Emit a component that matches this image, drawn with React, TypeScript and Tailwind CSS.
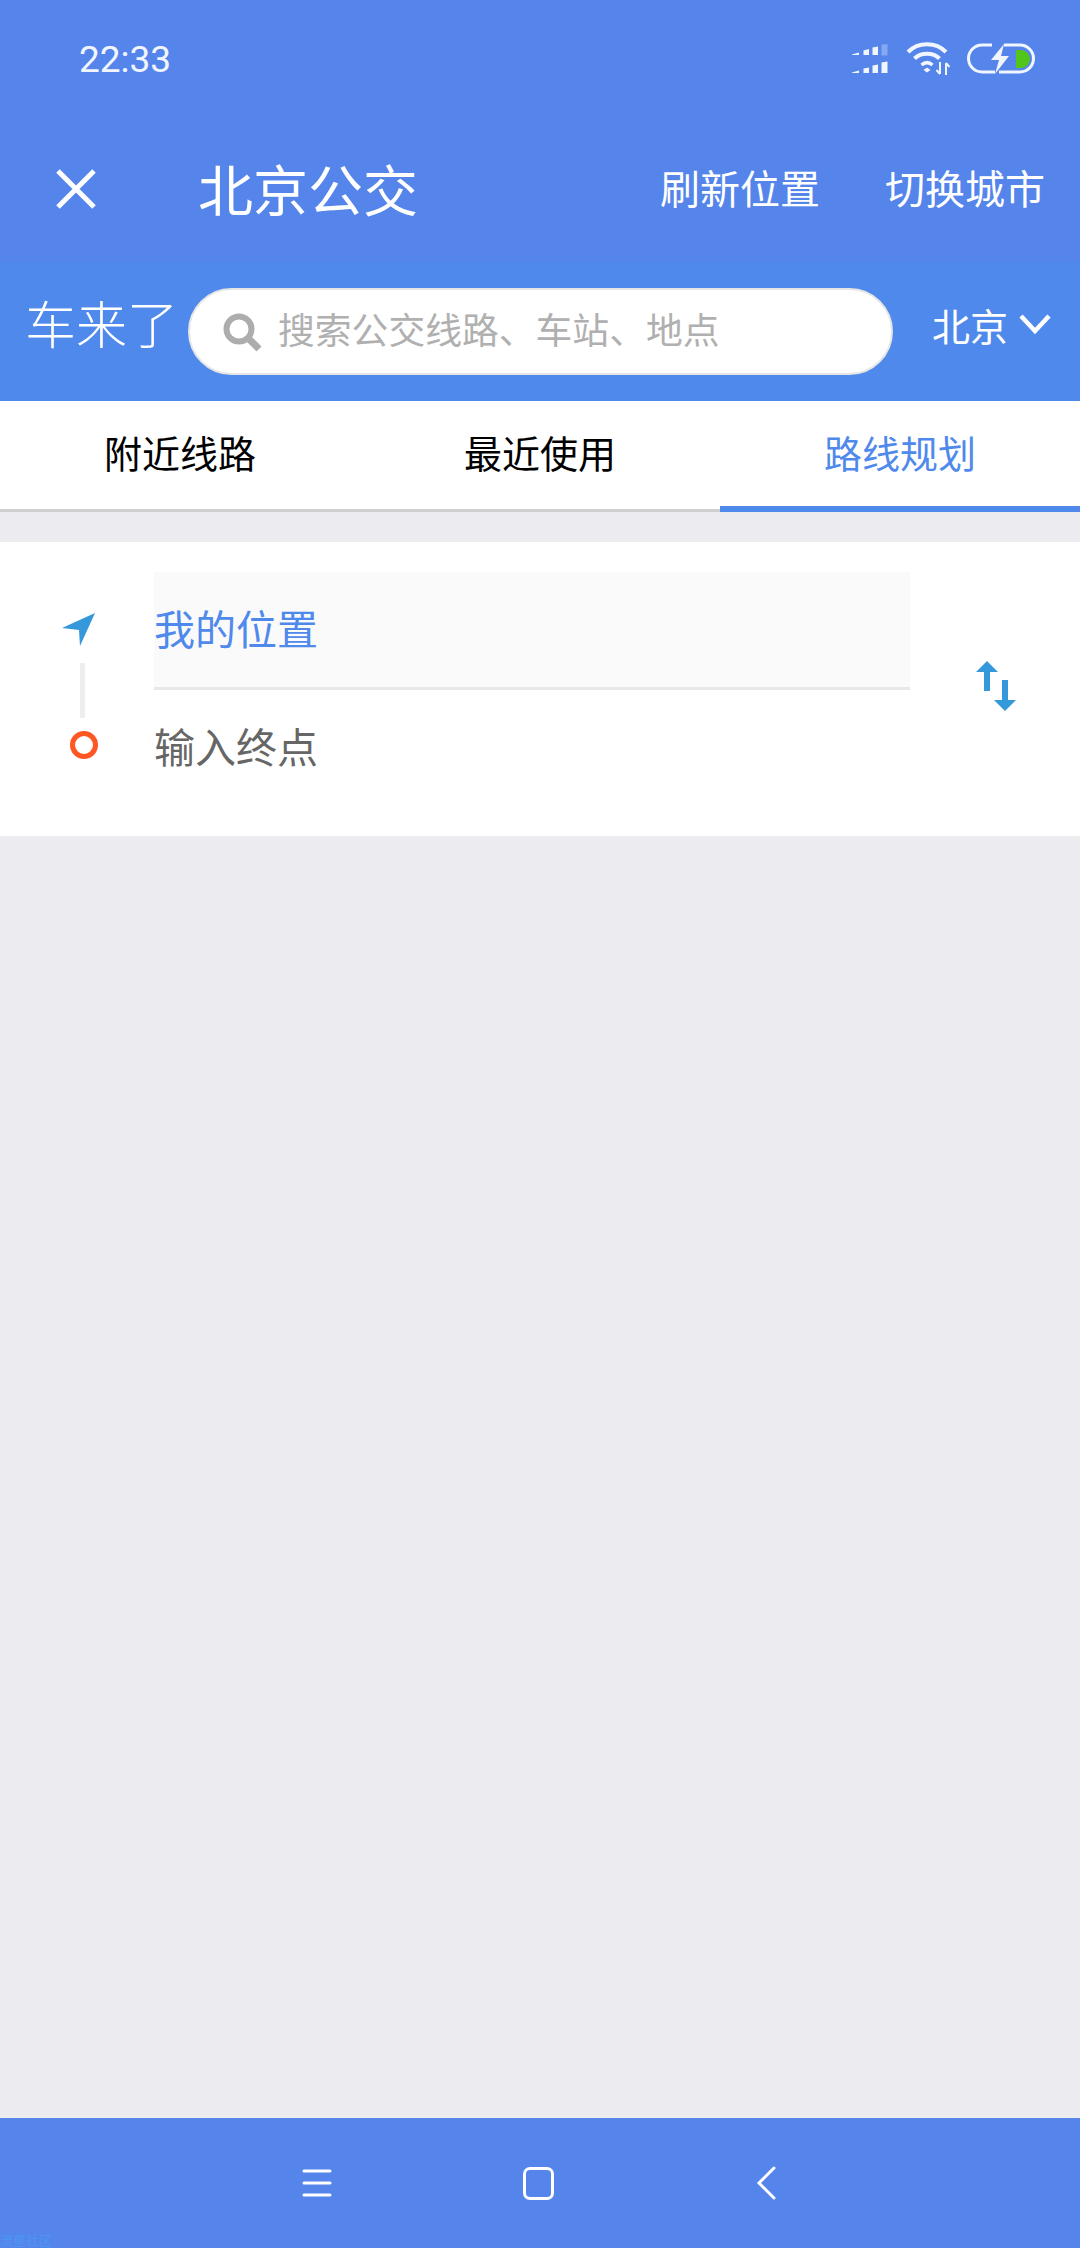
const cjk = "font-['Noto_Sans_CJK_SC',sans-serif]";

function SignalIcon() {
  return (
    <svg width="36" height="30" viewBox="0 0 36 30" fill="#f1f5fe">
      <path d="M0 10.500 L7 8.500 V11 H0 Z" />
      <path d="M11.500 6.500 L17 5 V11 H11.500 Z" />
      <path d="M20.500 3.500 L26 2.500 V11 H20.500 Z" />
      <path d="M29.500 0.800 L35.500 0 V11.500 H29.500 Z" fill="#86a8f1" />
      <path d="M0 28.500 L7 26.500 V29 H0 Z" />
      <path d="M11.500 24.500 L17 23.500 V29 H11.500 Z" />
      <path d="M20.500 21.500 L26 20.500 V29 H20.500 Z" />
      <path d="M29.500 18.500 L35.500 17.500 V29 H29.500 Z" />
    </svg>
  );
}

function WifiIcon() {
  return (
    <svg width="44" height="34" viewBox="0 0 44 34" fill="none" stroke="#f1f5fe">
      <path d="M2 10 C12 -0.500 30 -0.500 40 10" strokeWidth="4" />
      <path d="M8.500 16.500 C15 10 27 10 33.500 16.500" strokeWidth="4" />
      <path d="M15.500 23 C19 20 23 20 26.500 23" strokeWidth="3.500" />
      <path d="M17.500 28 L21 25.500 L24.500 28 L21 30.500 Z" fill="#f1f5fe" stroke="none" />
      <path d="M34 20 V32 M34 32 L30.500 28 M40 33 V21 M40 21 L43.500 25" strokeWidth="2" />
    </svg>
  );
}

function BatteryIcon() {
  return (
    <svg width="68" height="32" viewBox="0 0 68 32" fill="none">
      <path d="M25 2 H15 A13.500 13.500 0 0 0 15 29 H28" stroke="#f1f5fe" strokeWidth="3" />
      <path d="M37 2 H53 A13.500 13.500 0 0 1 53 29 H32" stroke="#f1f5fe" strokeWidth="3" />
      <path d="M37 1 L24 17 H32 L28 31 L42 13 H34 Z" fill="#f1f5fe" />
      <path d="M49 7 H54 A9 9 0 0 1 54 25 H49 Z" fill="#52c41a" />
    </svg>
  );
}

function LocateIcon() {
  return (
    <svg width="33" height="33" viewBox="0 0 33 33" fill="#3498db">
      <path d="M0 15 L33 0 L18 33 L17 17 Z" />
    </svg>
  );
}

function SwapIcon() {
  return (
    <svg width="40" height="50" viewBox="0 0 40 50" fill="#3498db">
      <path d="M11 0 L22 11 H14 V30 H8 V11 H0 Z" />
      <path d="M29 50 L18 39 H26 V19 H32 V39 H40 Z" />
    </svg>
  );
}

function SearchIcon() {
  return (
    <svg width="40" height="40" viewBox="0 0 40 40" fill="none" stroke="#adadad">
      <circle cx="17" cy="17" r="12.500" strokeWidth="6" />
      <path d="M26 26 L37 37" strokeWidth="7" />
    </svg>
  );
}

export default function App() {
  return (
    <div className={`relative flex h-[2248px] w-[1080px] flex-col overflow-hidden bg-[#ebebf0] ${cjk}`}>
      <div className="bg-[#5585eb] text-white">
        <div className="flex h-[118px] items-center justify-between pl-[79px] pr-[45px]">
          <span className="font-['Roboto',sans-serif] text-[37px] leading-none text-[#f1f5fe]">22:33</span>
          <div className="flex items-center">
            <SignalIcon />
            <div className="ml-[18px]"><WifiIcon /></div>
            <div className="ml-[17px]"><BatteryIcon /></div>
          </div>
        </div>
        <div className="flex h-[144px] items-center pl-[55px] pr-[35px]">
          <svg className="mb-[3px]" width="42" height="42" viewBox="0 0 42 42" stroke="white" strokeWidth="5">
            <path d="M3 3 L39 39 M39 3 L3 39" />
          </svg>
          <span className="mb-[6px] ml-[101px] text-[55px] leading-none">北京公交</span>
          <span className="mb-[6px] ml-auto text-[40px] leading-none">刷新位置</span>
          <span className="mb-[6px] ml-[65px] text-[40px] leading-none">切换城市</span>
        </div>
      </div>

      <div className="flex h-[139px] items-center bg-[#4f89ec] pl-[25px] text-white">
        <span className="mb-[19px] w-[163px] text-[51px] font-light leading-none">车来了</span>
        <div className="flex h-[87px] w-[705px] items-center rounded-[44px] border-2 border-[#e6e6e6] bg-white pl-[32px]">
          <SearchIcon />
          <span className="mb-[6px] ml-[16px] text-[36.800px] leading-none text-[#b0b0b0]">搜索公交线路、车站、地点</span>
        </div>
        <span className="mb-[13px] ml-[39px] text-[38px] leading-none">北京</span>
        <svg className="mb-[15px] ml-[11px]" width="32" height="22" viewBox="0 0 32 22" fill="none" stroke="white" strokeWidth="4.500">
          <path d="M2 3 L16 18 L30 3" />
        </svg>
      </div>

      <div className="flex h-[111px] border-b-[3px] border-[#cfcfd2] bg-white text-[38px] leading-none">
        <div className="flex w-[360px] items-center justify-center pb-[6px] text-black">附近线路</div>
        <div className="flex w-[360px] items-center justify-center pb-[6px] text-black">最近使用</div>
        <div className="relative flex w-[360px] items-center justify-center pb-[6px] text-[#4f89ec]">
          路线规划
          <div className="absolute -bottom-[3px] left-0 h-[6px] w-full bg-[#4f89ec]" />
        </div>
      </div>

      <div className="mt-[30px] flex h-[294px] items-center bg-white">
        <div className="mb-[6px] flex w-[154px] flex-col pl-[62px]">
          <LocateIcon />
          <div className="ml-[18px] mt-[17px] h-[55px] w-[5px] bg-[#eeeeee]" />
          <div className="ml-[8px] mt-[13px] h-[28px] w-[28px] rounded-full border-[5px] border-[#ff5722]" />
        </div>
        <div className="w-[756px]">
          <div className="flex h-[118px] items-center border-b-[3px] border-[#e8e8e8] bg-[#fafafa] pb-[4px] text-[41px] leading-none text-[#4f89ec]">我的位置</div>
          <div className="flex h-[117px] items-center pb-[6px] text-[41px] leading-none text-[#666666]">输入终点</div>
        </div>
        <div className="mb-[6px] ml-[66px]"><SwapIcon /></div>
      </div>

      <div className="mt-auto flex h-[130px] items-center bg-[#5585eb]">
        <svg className="ml-[302px]" width="30" height="28" viewBox="0 0 30 28" stroke="white" strokeWidth="3" strokeLinecap="round">
          <path d="M2 2 H28 M2 14 H28 M2 26 H28" />
        </svg>
        <div className="ml-[191px] h-[33px] w-[31px] rounded-[7px] border-[3px] border-white" />
        <svg className="ml-[202px]" width="20" height="34" viewBox="0 0 20 34" fill="none" stroke="white" strokeWidth="3" strokeLinecap="round">
          <path d="M18 2 L3 17 L18 32" />
        </svg>
      </div>

      <span className="absolute bottom-0 left-0 text-[13px] leading-[16px] text-[#4a97ee]">流星社区</span>
    </div>
  );
}
